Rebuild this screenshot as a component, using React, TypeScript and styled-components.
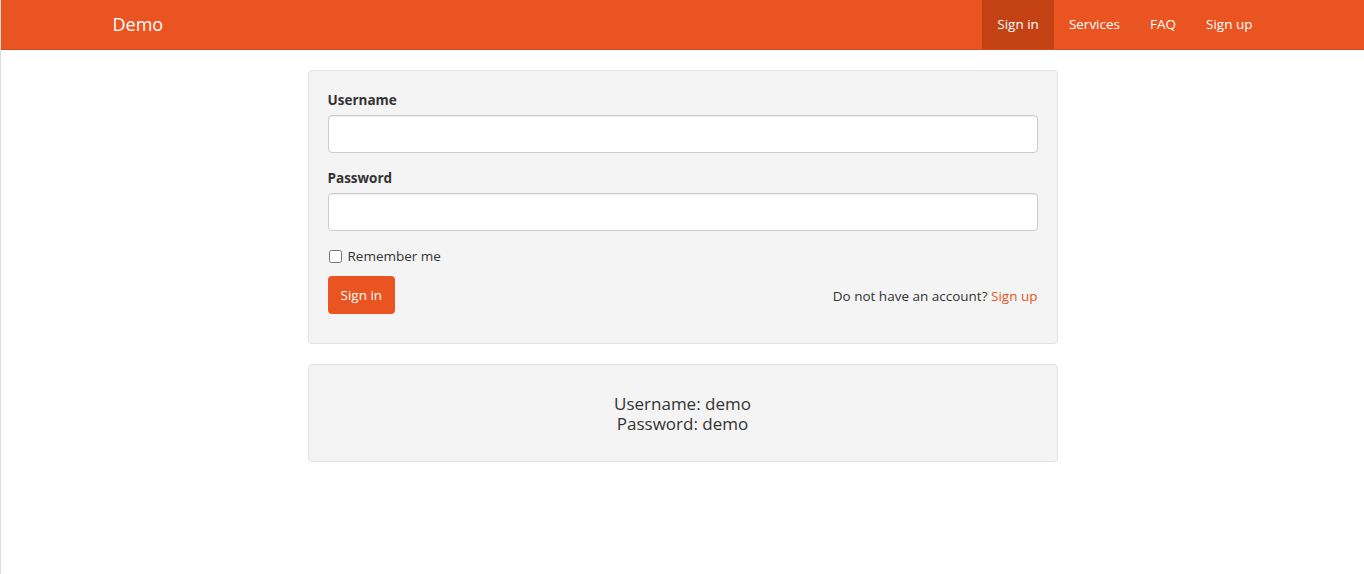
import React from "react";
import styled, { createGlobalStyle } from "styled-components";

const Global = createGlobalStyle`
  html, body { margin: 0; padding: 0; background: #fff; }
  body {
    font-family: "Open Sans", "Noto Sans", sans-serif;
    font-size: 14px;
    line-height: 20px;
    color: #333;
  }
  * { box-sizing: border-box; }
`;

const Page = styled.div`
  min-height: 574px;
  border-left: 1px solid #dcdcdc;
`;

const Navbar = styled.nav`
  height: 50px;
  background: #e95420;
  border-bottom: 1px solid #d8491a;
  margin-bottom: 20px;
`;

const NavInner = styled.div`
  width: 1170px;
  margin: 0 auto;
  padding: 0 15px;
  height: 100%;
  display: flex;
  align-items: stretch;
  justify-content: space-between;
`;

const Brand = styled.a`
  display: flex;
  align-items: center;
  color: #fff;
  font-size: 18px;
  text-decoration: none;
  padding: 0 0 1px 0;
`;

const NavList = styled.ul`
  list-style: none;
  margin: 0 -15px 0 0;
  padding: 0;
  display: flex;
  height: 49px;
`;

const NavItem = styled.li<{ $active?: boolean }>`
  display: flex;
  align-items: center;
  padding: 0 15px 1px;
  font-size: 13.5px;
  color: #fff;
  background: ${(p) => (p.$active ? "#c34113" : "transparent")};
`;

const Container = styled.div`
  width: 750px;
  margin: 0 auto;
`;

const Well = styled.div<{ $center?: boolean }>`
  background: #f4f4f4;
  border: 1px solid #e3e3e3;
  border-radius: 4px;
  padding: 19px;
  margin-bottom: 20px;
  text-align: ${(p) => (p.$center ? "center" : "left")};
`;

const FormGroup = styled.div`
  margin-bottom: 15px;
`;

const Label = styled.label`
  display: block;
  font-weight: 700;
  margin-bottom: 5px;
  font-size: 13.5px;
  line-height: 20px;
`;

const Input = styled.input`
  display: block;
  width: 100%;
  height: 38px;
  border: 1px solid #ccc;
  border-radius: 4px;
  background: #fff;
  padding: 8px 12px;
  font: inherit;
  box-shadow: inset 0 1px 1px rgba(0,0,0,0.075);
`;

const CheckRow = styled.label`
  display: flex;
  align-items: center;
  height: 20px;
  margin-bottom: 10px;
  gap: 6px;
  font-size: 13.5px;
`;

const Check = styled.input`
  width: 13px;
  height: 13px;
  margin: 0 0 0 1px;
`;

const ActionRow = styled.div`
  display: flex;
  justify-content: space-between;
  align-items: center;
  padding-bottom: 10px;
`;

const Button = styled.button`
  height: 38px;
  padding: 0 12px;
  background: #e95420;
  color: #fff;
  border: 1px solid transparent;
  border-radius: 4px;
  font: inherit;
  font-size: 13.5px;
`;

const Hint = styled.p`
  margin: 2px 0 0;
  font-size: 13.5px;
`;

const Link = styled.a`
  color: #e95420;
  text-decoration: none;
`;

const Creds = styled.h4`
  margin: 10px 0 8px;
  font-size: 17px;
  font-weight: 400;
`;

const CredLine = styled.span`
  display: block;
  height: 20px;
  line-height: 20px;
`;

export default function App() {
  return (
    <Page>
      <Global />
      <Navbar>
        <NavInner>
          <Brand href="#">Demo</Brand>
          <NavList>
            <NavItem $active>Sign in</NavItem>
            <NavItem>Services</NavItem>
            <NavItem>FAQ</NavItem>
            <NavItem>Sign up</NavItem>
          </NavList>
        </NavInner>
      </Navbar>
      <Container>
        <Well>
          <FormGroup>
            <Label>Username</Label>
            <Input type="text" />
          </FormGroup>
          <FormGroup>
            <Label>Password</Label>
            <Input type="password" />
          </FormGroup>
          <CheckRow>
            <Check type="checkbox" />
            Remember me
          </CheckRow>
          <ActionRow>
            <Button>Sign in</Button>
            <Hint>
              Do not have an account? <Link href="#">Sign up</Link>
            </Hint>
          </ActionRow>
        </Well>
        <Well $center>
          <Creds>
            <CredLine>Username: demo</CredLine>
            <CredLine>Password: demo</CredLine>
          </Creds>
        </Well>
      </Container>
    </Page>
  );
}
